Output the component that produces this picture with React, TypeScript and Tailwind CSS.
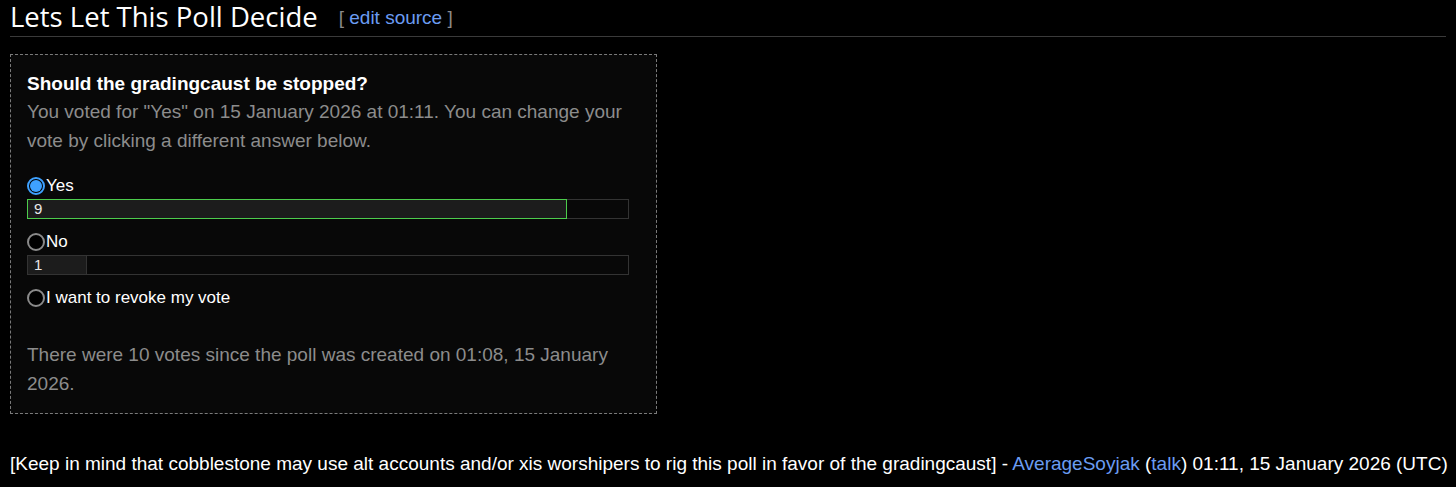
import React from "react";

const options = [
  { label: "Yes", votes: 9, pct: 90, checked: true },
  { label: "No", votes: 1, pct: 10, checked: false },
];

function Radio({ checked }: { checked: boolean }) {
  if (checked) {
    return (
      <span className="w-[18px] h-[18px] rounded-full border-2 border-[#3ea1ff] bg-black flex items-center justify-center shrink-0">
        <span className="w-[12px] h-[12px] rounded-full bg-[#3ea1ff]" />
      </span>
    );
  }
  return <span className="w-[18px] h-[18px] rounded-full border-2 border-[#8a8a8a] bg-black shrink-0" />;
}

export default function App() {
  return (
    <div className="min-h-[487px] bg-black text-white px-[10px] font-['Liberation_Sans',Arial,sans-serif]">
      {/* Heading */}
      <div className="flex items-end h-[37px] border-b border-[#3a3a3a] pb-[2px]">
        <h2 className="font-['Open_Sans',sans-serif] text-[27.5px] leading-[34px] text-white">Lets Let This Poll Decide</h2>
        <span className="ml-[21px] mb-[2px] text-[19px] leading-[28px] text-[#8a8a8a]">
          [ <span className="text-[#6b9cf2]">edit source</span> ]
        </span>
      </div>

      {/* Poll box */}
      <div className="mt-[17px] w-[647px] border border-dashed border-[#7a7a7a] bg-[#080808] px-[16px] pt-[16px] pb-[15px]">
        <p className="text-[19px] font-bold leading-[26px]">Should the gradingcaust be stopped?</p>
        <p className="text-[19px] leading-[29px] text-[#8c8c8c]">
          You voted for "Yes" on 15 January 2026 at 01:11. You can change your vote by clicking a different answer below.
        </p>

        <div className="mt-[21px] flex flex-col">
          {options.map((o) => (
            <div key={o.label} className="mb-[13px]">
              <label className="flex items-center text-[17px] leading-[20px]">
                <Radio checked={o.checked} />
                <span className="ml-[1px]">{o.label}</span>
              </label>
              <div className="mt-[3px] w-[602px] h-[20px] border border-[#333] relative">
                <div
                  className={`absolute left-[-1px] top-[-1px] h-[20px] bg-[#1c1c1c] ${o.checked ? "border border-[#4ccc4c]" : "border border-[#333]"}`}
                  style={{ width: `${o.pct}%` }}
                />
                <span className="absolute left-[6px] top-0 text-[15px] leading-[18px] text-[#e8e8e8]">{o.votes}</span>
              </div>
            </div>
          ))}
          <label className="flex items-center text-[17px] leading-[20px]">
            <Radio checked={false} />
            <span className="ml-[1px]">I want to revoke my vote</span>
          </label>
        </div>

        <p className="mt-[32px] text-[19px] leading-[29px] text-[#8c8c8c]">
          There were 10 votes since the poll was created on 01:08, 15 January 2026.
        </p>
      </div>

      {/* Signature */}
      <p className="mt-[38px] text-[19px] leading-[24px] whitespace-nowrap">
        [Keep in mind that cobblestone may use alt accounts and/or xis worshipers to rig this poll in favor of the gradingcaust] -{" "}
        <span className="text-[#6b9cf2]">AverageSoyjak</span> (<span className="text-[#6b9cf2]">talk</span>) 01:11, 15 January 2026 (UTC)
      </p>
    </div>
  );
}
